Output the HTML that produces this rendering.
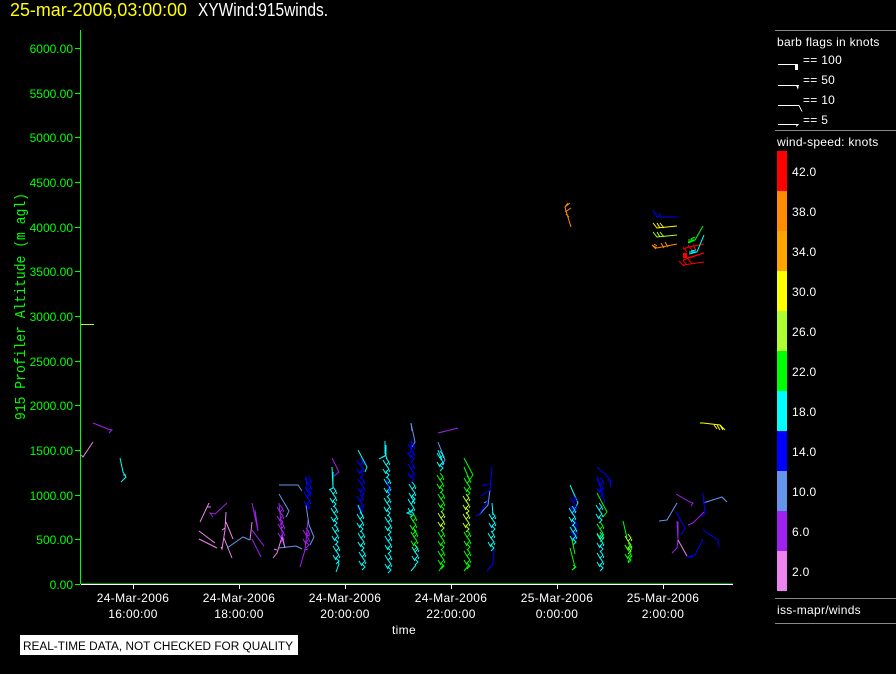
<!DOCTYPE html>
<html><head><meta charset="utf-8"><style>
html,body{margin:0;padding:0;background:#000;width:896px;height:674px;overflow:hidden}
svg{display:block}
text{font-family:"Liberation Sans",sans-serif;font-size:12px;fill:#fff}
.g text{fill:#0f0;text-anchor:end}
.d text{text-anchor:middle;letter-spacing:.35px}
.l text{letter-spacing:.28px}
.w path,.w use{fill:none}
</style></head><body>
<svg width="896" height="674" viewBox="0 0 896 674" xmlns="http://www.w3.org/2000/svg">
<defs><path id="z" d="M-1 0l3 4-3 3 3 4-3 3 3 3-3 3M-4 2l3 5M-4 11l3 5M3 5l-1 2M3 12l-1 2"/></defs>
<rect width="896" height="674" fill="#000"/>
<text x="10" y="16" style="font-size:18px;fill:#ff0" textLength="177" lengthAdjust="spacingAndGlyphs">25-mar-2006,03:00:00</text>
<text x="198" y="16" style="font-size:18px" textLength="130" lengthAdjust="spacingAndGlyphs">XYWind:915winds.</text>

<g shape-rendering="crispEdges" fill="none">
<path d="M80.500 30V584M81 584H733" stroke="#0f0"/>
<path d="M81 584.500H733" stroke="#fff"/>
<path d="M75 48.500h5M75 93.500h5M75 137.500h5M75 182.500h5M75 227.500h5M75 271.500h5M75 316.500h5M75 361.500h5M75 405.500h5M75 450.500h5M75 495.500h5M75 539.500h5M75 584.500h5" stroke="#0f0"/>
<path d="M133.500 584v5M239.500 584v5M345.500 584v5M451.500 584v5M557.500 584v5M663.500 584v5" stroke="#fff"/>
<path d="M81 324.500h13" stroke="#adff2f"/>
<path d="M775 30.500h121M775 130.500h121M775 598.500h121M775 623.500h121" stroke="#888"/>
</g>

<g class="g">
<text x="73" y="53">6000.00</text><text x="73" y="98">5500.00</text><text x="73" y="142">5000.00</text><text x="73" y="187">4500.00</text><text x="73" y="232">4000.00</text><text x="73" y="276">3500.00</text><text x="73" y="321">3000.00</text><text x="73" y="366">2500.00</text><text x="73" y="410">2000.00</text><text x="73" y="455">1500.00</text><text x="73" y="500">1000.00</text><text x="73" y="544">500.00</text><text x="73" y="589">0.00</text>
</g>
<text transform="translate(25,420) rotate(-90)" style="font-family:'Liberation Mono',monospace;font-size:15px;fill:#0f0" textLength="227" lengthAdjust="spacingAndGlyphs">915 Profiler Altitude (m agl)</text>

<g class="d">
<text x="133" y="602">24-Mar-2006</text><text x="133" y="618">16:00:00</text>
<text x="239" y="602">24-Mar-2006</text><text x="239" y="618">18:00:00</text>
<text x="345" y="602">24-Mar-2006</text><text x="345" y="618">20:00:00</text>
<text x="451" y="602">24-Mar-2006</text><text x="451" y="618">22:00:00</text>
<text x="557" y="602">25-Mar-2006</text><text x="557" y="618">0:00:00</text>
<text x="663" y="602">25-Mar-2006</text><text x="663" y="618">2:00:00</text>
<text x="404" y="634">time</text>
</g>

<rect x="20" y="635" width="278" height="20" fill="#fff"/>
<text x="23" y="650" style="font-size:11.500px;fill:#000" textLength="270" lengthAdjust="spacingAndGlyphs">REAL-TIME DATA, NOT CHECKED FOR QUALITY</text>

<g class="l">
<text x="777" y="46">barb flags in knots</text>
<text x="803" y="64">== 100</text><text x="803" y="84">== 50</text><text x="803" y="104">== 10</text><text x="803" y="124">== 5</text>
<text x="777" y="146">wind-speed: knots</text>
<text x="792" y="176">42.0</text><text x="792" y="216">38.0</text><text x="792" y="256">34.0</text><text x="792" y="296">30.0</text><text x="792" y="336">26.0</text><text x="792" y="376">22.0</text><text x="792" y="416">18.0</text><text x="792" y="456">14.0</text><text x="792" y="496">10.0</text><text x="792" y="536">6.0</text><text x="792" y="576">2.0</text>
<text x="777" y="614">iss-mapr/winds</text>
</g>

<g shape-rendering="crispEdges">
<rect x="777" y="151" width="10" height="40" fill="#f00"/>
<rect x="777" y="191" width="10" height="40" fill="#ff8c00"/>
<rect x="777" y="231" width="10" height="40" fill="#ffa500"/>
<rect x="777" y="271" width="10" height="40" fill="#ff0"/>
<rect x="777" y="311" width="10" height="40" fill="#adff2f"/>
<rect x="777" y="351" width="10" height="40" fill="#0f0"/>
<rect x="777" y="391" width="10" height="40" fill="#0ff"/>
<rect x="777" y="431" width="10" height="40" fill="#00f"/>
<rect x="777" y="471" width="10" height="40" fill="#6495ed"/>
<rect x="777" y="511" width="10" height="40" fill="#a020f0"/>
<rect x="777" y="551" width="10" height="40" fill="#ee82ee"/>
<path d="M778 64.500h20M778 85.500h21M778 105.500h21l3 6M778 124.500h20l-2 2" stroke="#fff" fill="none"/>
<rect x="795" y="64" width="3" height="6" fill="#fff"/>
<path d="M796 85h3l-1 5z" fill="#fff"/>
</g>

<g class="w" fill="none" stroke-width="1">
<!-- left scattered barbs -->
<g stroke="#a020f0">
<path d="M93 423l15 6 4 1-3 3M227 503l-12 11-5-1 3 4M252 503l6 28-3-21M252 530l12 16M252 539l9 18"/>
<use href="#z" x="281" y="505"/><use href="#z" x="282" y="522"/>
<path d="M279 503l3 30 3 15"/>
<use href="#z" x="307" y="528"/><path d="M308 520l-3 30-5 17M306 535l4 1M304 550l4 -1"/>
<path d="M676 494l14 8 3 1-2 3M704 512l-11 11-5 2M677 521l1 19 -1 8-5 5M678 522v16"/>
<path d="M438 433l20-5"/>
</g>
<g stroke="#ee82ee">
<path d="M93 442l-10 15-2-2M209 503l-9 19M207 507h4M199 531l16 12M199 539l18 9M226 512l-1 18-3 19-1-2M222 530l3-2M226 522l7 17M224 538l8 20M252 522l-2 18M282 537l-5 16-4 5M277 550l-3-1M282 537l3 11M678 540l9 16"/>
</g>
<path d="M120 458l3 14 3 5-5 5M123 475h3" stroke="#0ff"/>
<g stroke="#6495ed">
<path d="M227 548l16-11 7 3M279 485h19l4 6M279 494l10 17-3 6M279 548l17-2 6 3M306 505l3 20 5 12-4 8"/>
<path d="M411 423l4 19-3 5M438 442l7 18-3 5M490 490l-2 15-9 10M484 503l5-3"/>
<path d="M677 503l-10 17-8 1M703 503l19-6 5 5"/>
</g>
<g stroke="#00f">
<use href="#z" x="308" y="490"/><use href="#z" x="309" y="476"/>
<path d="M306 476l1 14M597 467l12 11 2 9-1-7-3 0M703 493l2 20-3 4M676 512l9 16-4 7M703 539l-8 16-8 2h6M703 530l15 10 1 7M703 503h3"/>
<path d="M492 467l-2 23-9 6M489 484l-7 2M488 500l-9 15-3 1"/>
</g>
<!-- chain columns -->
<path d="M332 467l1 21-4 2M329 490l4-2M333 472v16" stroke="#0ff"/>
<use href="#z" x="334" y="487" stroke="#0ff"/><use href="#z" x="335" y="506" stroke="#0ff"/><use href="#z" x="336" y="525" stroke="#0ff"/><use href="#z" x="337" y="544" stroke="#0ff"/>
<path d="M338 562l1 2-3 8" stroke="#0ff"/>
<path d="M332 458l7 14-5 4" stroke="#a020f0"/>

<path d="M358 450l9 17-2 5" stroke="#0ff"/>
<use href="#z" x="361" y="458" stroke="#00f"/><use href="#z" x="362" y="477" stroke="#00f"/><use href="#z" x="361" y="494" stroke="#00f"/>
<use href="#z" x="361" y="512" stroke="#0ff"/><use href="#z" x="362" y="531" stroke="#0ff"/><use href="#z" x="363" y="550" stroke="#0ff"/>
<path d="M358 505l5 12" stroke="#0ff"/>

<path d="M385 441v12l2 6M386 455l-7 4 6-3M386 445v12" stroke="#0ff"/>
<use href="#z" x="387" y="458" stroke="#0ff"/><use href="#z" x="388" y="477" stroke="#0ff"/><use href="#z" x="388" y="496" stroke="#0ff"/><use href="#z" x="389" y="515" stroke="#0ff"/><use href="#z" x="389" y="534" stroke="#0ff"/><use href="#z" x="389" y="553" stroke="#0ff"/>
<path d="M387 480l3 14" stroke="#00f"/>

<path d="M411 423l1 8" stroke="#6495ed"/>
<use href="#z" x="412" y="442" stroke="#00f"/><use href="#z" x="412" y="462" stroke="#00f"/><path d="M412 438l-1 14-4 2" stroke="#00f"/>
<use href="#z" x="413" y="482" stroke="#0ff"/><use href="#z" x="412" y="497" stroke="#0ff"/>
<use href="#z" x="414" y="514" stroke="#0f0"/><use href="#z" x="415" y="530" stroke="#0f0"/>
<use href="#z" x="416" y="545" stroke="#0ff"/><path d="M416 565l-5 6" stroke="#0ff"/>
<path d="M413 510l-6 3 5 2" stroke="#0ff"/>

<use href="#z" x="441" y="451" stroke="#0ff"/><path d="M438 450l4 10" stroke="#0ff"/>
<use href="#z" x="441" y="473" stroke="#0f0"/><use href="#z" x="442" y="492" stroke="#0f0"/><use href="#z" x="442" y="511" stroke="#adff2f"/><use href="#z" x="442" y="530" stroke="#0f0"/><use href="#z" x="442" y="549" stroke="#0f0"/>
<path d="M443 565l-4 6" stroke="#0f0"/>

<path d="M464 458l9 17-3 4M464 467l6 14" stroke="#0f0"/>
<use href="#z" x="468" y="476" stroke="#0f0"/><use href="#z" x="467" y="494" stroke="#adff2f"/><use href="#z" x="467" y="512" stroke="#adff2f"/><use href="#z" x="468" y="530" stroke="#0f0"/><use href="#z" x="468" y="549" stroke="#0f0"/>
<path d="M469 565l-5 6" stroke="#0f0"/>

<path d="M492 503l1 12" stroke="#0ff"/><use href="#z" x="493" y="512" stroke="#0ff"/><use href="#z" x="492" y="531" stroke="#0ff"/>
<path d="M494 550l-1 14-6 7" stroke="#00f"/>

<path d="M570 485l8 18-3 5" stroke="#0ff"/>
<use href="#z" x="574" y="495" stroke="#00f"/><use href="#z" x="575" y="520" stroke="#00f"/><use href="#z" x="573" y="506" stroke="#0ff"/><use href="#z" x="574" y="525" stroke="#0ff"/>
<path d="M570 548l5 19-3 3 4-3-3-2M572 540l3 14" stroke="#0f0"/>

<path d="M597 476l8 27" stroke="#00f"/><use href="#z" x="601" y="477" stroke="#00f"/>
<path d="M597 493l10 19-4 5" stroke="#0f0"/>
<use href="#z" x="600" y="503" stroke="#0ff"/><use href="#z" x="601" y="522" stroke="#0f0"/><use href="#z" x="601" y="532" stroke="#0ff"/><use href="#z" x="601" y="551" stroke="#0ff"/>

<path d="M623 521l4 17" stroke="#0f0"/><use href="#z" x="629" y="534" stroke="#adff2f"/><use href="#z" x="629" y="543" stroke="#0f0"/><path d="M631 556l-3 6" stroke="#0f0"/>

<!-- upper right -->
<path d="M571 227l-5-16-1-4 3-4M565 212l6-4M565 207l5-4M566 214l3 3" stroke="#ff8c00"/>
<path d="M677 217H657l-4-7M658 213l3 3" stroke="#00f"/>
<path d="M677 226l-20 2-4-5M657 223l3 5M660 223l4 5" stroke="#ff0"/>
<path d="M677 235l-20 2-4-5M657 232l3 5M660 232l4 5" stroke="#adff2f"/>
<path d="M677 244l-20 4-5-3 4 4M657 246l-3-2M661 243l3 5M665 242l3 5" stroke="#ff8c00"/>
<path d="M704 253l-21 7M683 247l4 5M688 245l4 5M693 245l3 5M704 244l-15 3-6 2" stroke="#f00"/>
<rect x="683" y="253" width="4" height="5" fill="#f00" stroke="none"/>
<path d="M704 253l-17 5" stroke="#f00"/>
<path d="M704 262l-21 3-4-4M679 261l5 5M683 260l4 5M688 259l4 5" stroke="#f00"/>
<path d="M703 226l-8 14-7 3M695 240h-7M693 241l-5 1M695 237l-4 2" stroke="#0f0"/>
<path d="M704 235l-7 17-8 2M697 252l-8 0M696 250l-5 1" stroke="#0ff"/>
<path d="M703 423l17 2 5 5M714 425l3 4M717 425l3 5M720 425l3 5M700 423h3" stroke="#ff0"/>
</g>
</svg>
</body></html>
